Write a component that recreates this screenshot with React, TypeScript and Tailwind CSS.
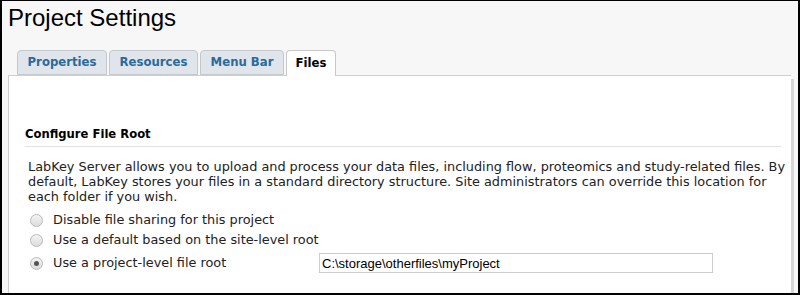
import { useState } from "react";

const tabs = [
  { name: "Properties", w: "w-[90px]" },
  { name: "Resources", w: "w-[89px]" },
  { name: "Menu Bar", w: "w-[84px]" },
  { name: "Files", w: "w-[50px]" },
];

const options = [
  { id: "disable", label: "Disable file sharing for this project" },
  { id: "site", label: "Use a default based on the site-level root" },
  { id: "project", label: "Use a project-level file root" },
];

function Radio({ checked }: { checked: boolean }) {
  return (
    <span className="flex h-[13px] w-[13px] shrink-0 items-center justify-center rounded-full border border-[#b9b9b9] bg-gradient-to-b from-[#f4f4f4] to-[#dcdcdc]">
      {checked && <span className="h-[5px] w-[5px] rounded-full bg-[#555]" />}
    </span>
  );
}

export default function App() {
  const [active, setActive] = useState("Files");
  const [choice, setChoice] = useState("project");
  const [root, setRoot] = useState("C:\\storage\\otherfiles\\myProject");

  return (
    <div className="h-[295px] w-[800px] overflow-hidden border-t border-l-2 border-r-2 border-b-2 border-black bg-[#f7f7f7] font-['DejaVu_Sans',sans-serif]">
      <h1 className="pl-[6px] pt-[3px] font-['Liberation_Sans',Arial,sans-serif] text-[24px] leading-[28px] text-black">
        Project Settings
      </h1>

      <div className="mt-[18px] flex gap-[2px] pl-[15px]">
        {tabs.map((t) => {
          const on = t.name === active;
          return (
            <button
              key={t.name}
              onClick={() => setActive(t.name)}
              className={
                on
                  ? `relative z-10 -mb-px h-[26px] rounded-t-[4px] border border-b-0 border-[#c8c8c8] bg-white text-center text-[11.7px] font-bold text-black ${t.w}`
                  : `h-[25px] rounded-t-[4px] border border-[#c3c8cc] bg-[#dfe5eb] text-center text-[11.7px] font-bold text-[#2b6a9b] ${t.w}`
              }
            >
              {t.name}
            </button>
          );
        })}
      </div>

      <div className="ml-[6px] mr-[4px] flex h-[220px]">
        <div className="flex-1 border-l border-t border-[#cfcfcf] bg-white pl-[16px] pr-[4px] pt-[51px]">
          <div className="mr-[6px] border-b border-[#e2e2e2] pb-[4px] text-[11.6px] font-bold leading-[15px] text-black">
            Configure File Root
          </div>
          <p className="mt-[12px] pl-[3px] text-[12.85px] leading-[15px] text-[#222]">
            LabKey Server allows you to upload and process your data files, including flow, proteomics and study-related
            files. By default, LabKey stores your files in a standard directory structure. Site administrators can override
            this location for each folder if you wish.
          </p>
          <div className="mt-[6px] flex flex-col pl-[5px]">
            {options.map((o) => (
              <label
                key={o.id}
                onClick={() => setChoice(o.id)}
                className={
                  o.id === "project"
                    ? "mt-[2px] flex h-[22px] items-center text-[12.85px] text-[#222]"
                    : "flex h-[20px] items-center text-[12.85px] text-[#222]"
                }
              >
                <Radio checked={choice === o.id} />
                <span className="ml-[10px] w-[266px]">{o.label}</span>
                {o.id === "project" && (
                  <input
                    value={root}
                    onChange={(e) => setRoot(e.target.value)}
                    className="h-[20px] w-[394px] border border-[#cdcdcd] bg-white px-[2px] font-['Liberation_Sans',Arial,sans-serif] text-[13px] text-black outline-none"
                  />
                )}
              </label>
            ))}
          </div>
        </div>
        <div className="mt-[4px] w-[3px] bg-[#d6d6d6]" />
      </div>
    </div>
  );
}
